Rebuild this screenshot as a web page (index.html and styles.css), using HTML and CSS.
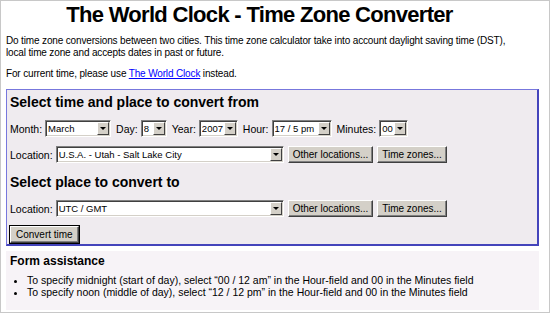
FILE: index.html
```html
<!DOCTYPE html>
<html lang="en">
<head>
    <meta charset="UTF-8">
    <title>The World Clock - Time Zone Converter</title>
    <link rel="stylesheet" href="styles.css">
</head>
<body>
    <div class="page">
        <div class="head">
            <h1>The World Clock - Time Zone Converter</h1>
            <p class="intro">Do time zone conversions between two cities. This time zone calculator take into account daylight saving time (DST), local time zone and accepts dates in past or future.</p>
            <p class="intro second">For current time, please use <a href="#">The World Clock</a> instead.</p>
        </div>

        <form class="converter">
            <h2>Select time and place to convert from</h2>
            <div class="row">
                <label>Month:</label>
                <span class="sel w-month"><select><option>March</option></select></span>
                <label>Day:</label>
                <span class="sel w-day"><select><option>8</option></select></span>
                <label>Year:</label>
                <span class="sel w-year"><select><option>2007</option></select></span>
                <label>Hour:</label>
                <span class="sel w-hour"><select><option>17 / 5 pm</option></select></span>
                <label>Minutes:</label>
                <span class="sel w-min"><select><option>00</option></select></span>
            </div>
            <div class="row">
                <label>Location:</label>
                <span class="sel w-loc"><select><option>U.S.A. - Utah - Salt Lake City</option></select></span>
                <button type="button" class="btn">Other locations...</button>
                <button type="button" class="btn">Time zones...</button>
            </div>

            <h2 class="to">Select place to convert to</h2>
            <div class="row">
                <label>Location:</label>
                <span class="sel w-loc"><select><option>UTC / GMT</option></select></span>
                <button type="button" class="btn">Other locations...</button>
                <button type="button" class="btn">Time zones...</button>
            </div>
            <div class="row">
                <button type="button" class="btn default">Convert time</button>
            </div>
        </form>

        <div class="assist">
            <h3>Form assistance</h3>
            <ul>
                <li>To specify midnight (start of day), select &ldquo;00 / 12 am&rdquo; in the Hour-field and 00 in the Minutes field</li>
                <li>To specify noon (middle of day), select &ldquo;12 / 12 pm&rdquo; in the Hour-field and 00 in the Minutes field</li>
            </ul>
        </div>
    </div>
</body>
</html>
```

FILE: styles.css
```css
body {
    margin: 0;
    font-family: "Liberation Sans", Arial, sans-serif;
    font-size: 10px;
    color: #000;
    background: #fff;
}
.page {
    box-sizing: border-box;
    height: 313px;
    border: 1px solid #c8c8c8;
    padding: 0 10px 0 5px;
    overflow: hidden;
}
.head {
    margin-right: 26px;
}
h1 {
    margin: 0;
    font-size: 22px;
    line-height: 28px;
    letter-spacing: -0.7px;
    text-align: center;
}
.intro {
    margin: 6px 0 0;
    line-height: 12px;
    letter-spacing: -0.15px;
}
.intro.second {
    margin-top: 9px;
}
a {
    color: #0000ff;
}
.converter {
    margin-top: 9px;
    background: #efebef;
    border: 1px solid #7777dd;
    border-right: 2px solid #4444bb;
    border-bottom: 2px solid #4444bb;
    padding: 0 3px 1px 3px;
}
h2 {
    margin: 0;
    padding: 4px 0 0;
    font-size: 14px;
    line-height: 17px;
}
h2.to {
    margin-top: 7px;
}
.row {
    display: flex;
    align-items: center;
    height: 17px;
    margin-top: 9px;
}
label {
    font-size: 10.5px;
    margin-right: 3px;
}
.sel {
    position: relative;
    display: inline-block;
    height: 17px;
    margin-right: 5px;
    box-sizing: border-box;
    border-top: 1px solid #808080;
    border-left: 1px solid #808080;
    border-right: 1px solid #fff;
    border-bottom: 1px solid #fff;
    box-shadow: inset 1px 1px 0 #404040, inset -1px -1px 0 #d4d0c8;
    background: #fff;
}
.sel select {
    -webkit-appearance: none;
    appearance: none;
    border: none;
    background: transparent;
    font: 9.5px "Liberation Sans", Arial, sans-serif;
    padding: 0 0 0 2px;
    margin: 0;
    height: 15px;
    width: 100%;
    outline: none;
}
.sel::after {
    content: "";
    position: absolute;
    top: 1px;
    right: 1px;
    width: 12px;
    height: 13px;
    box-sizing: border-box;
    background: #d4d0c8;
    border-top: 1px solid #fff;
    border-left: 1px solid #fff;
    border-right: 1px solid #404040;
    border-bottom: 1px solid #404040;
}
.sel::before {
    content: "";
    position: absolute;
    top: 6px;
    right: 4px;
    width: 0;
    height: 0;
    border-left: 3px solid transparent;
    border-right: 3px solid transparent;
    border-top: 3px solid #000;
    z-index: 1;
}
.w-month { width: 66px; }
.w-day { width: 26px; }
.w-year { width: 39px; }
.w-hour { width: 60px; }
.w-min { width: 29px; }
.w-loc { width: 228px; margin-right: 4px; }
.btn {
    height: 17px;
    padding: 0 4px;
    margin-right: 4px;
    font: 10px "Liberation Sans", Arial, sans-serif;
    color: #000;
    background: #d4d0c8;
    border-top: 1px solid #fff;
    border-left: 1px solid #fff;
    border-right: 1px solid #404040;
    border-bottom: 1px solid #404040;
    box-shadow: inset -1px -1px 0 #808080;
}
.btn.default {
    padding: 0 5px;
    outline: 1px solid #000;
}
.assist {
    margin-top: 5px;
    background: #f7f3f7;
    padding: 3px 4px 12px;
}
h3 {
    margin: 0;
    font-size: 12px;
    line-height: 15px;
}
ul {
    margin: 5px 0 0;
    padding-left: 17px;
}
li {
    font-size: 10.5px;
    line-height: 12px;
}
```
